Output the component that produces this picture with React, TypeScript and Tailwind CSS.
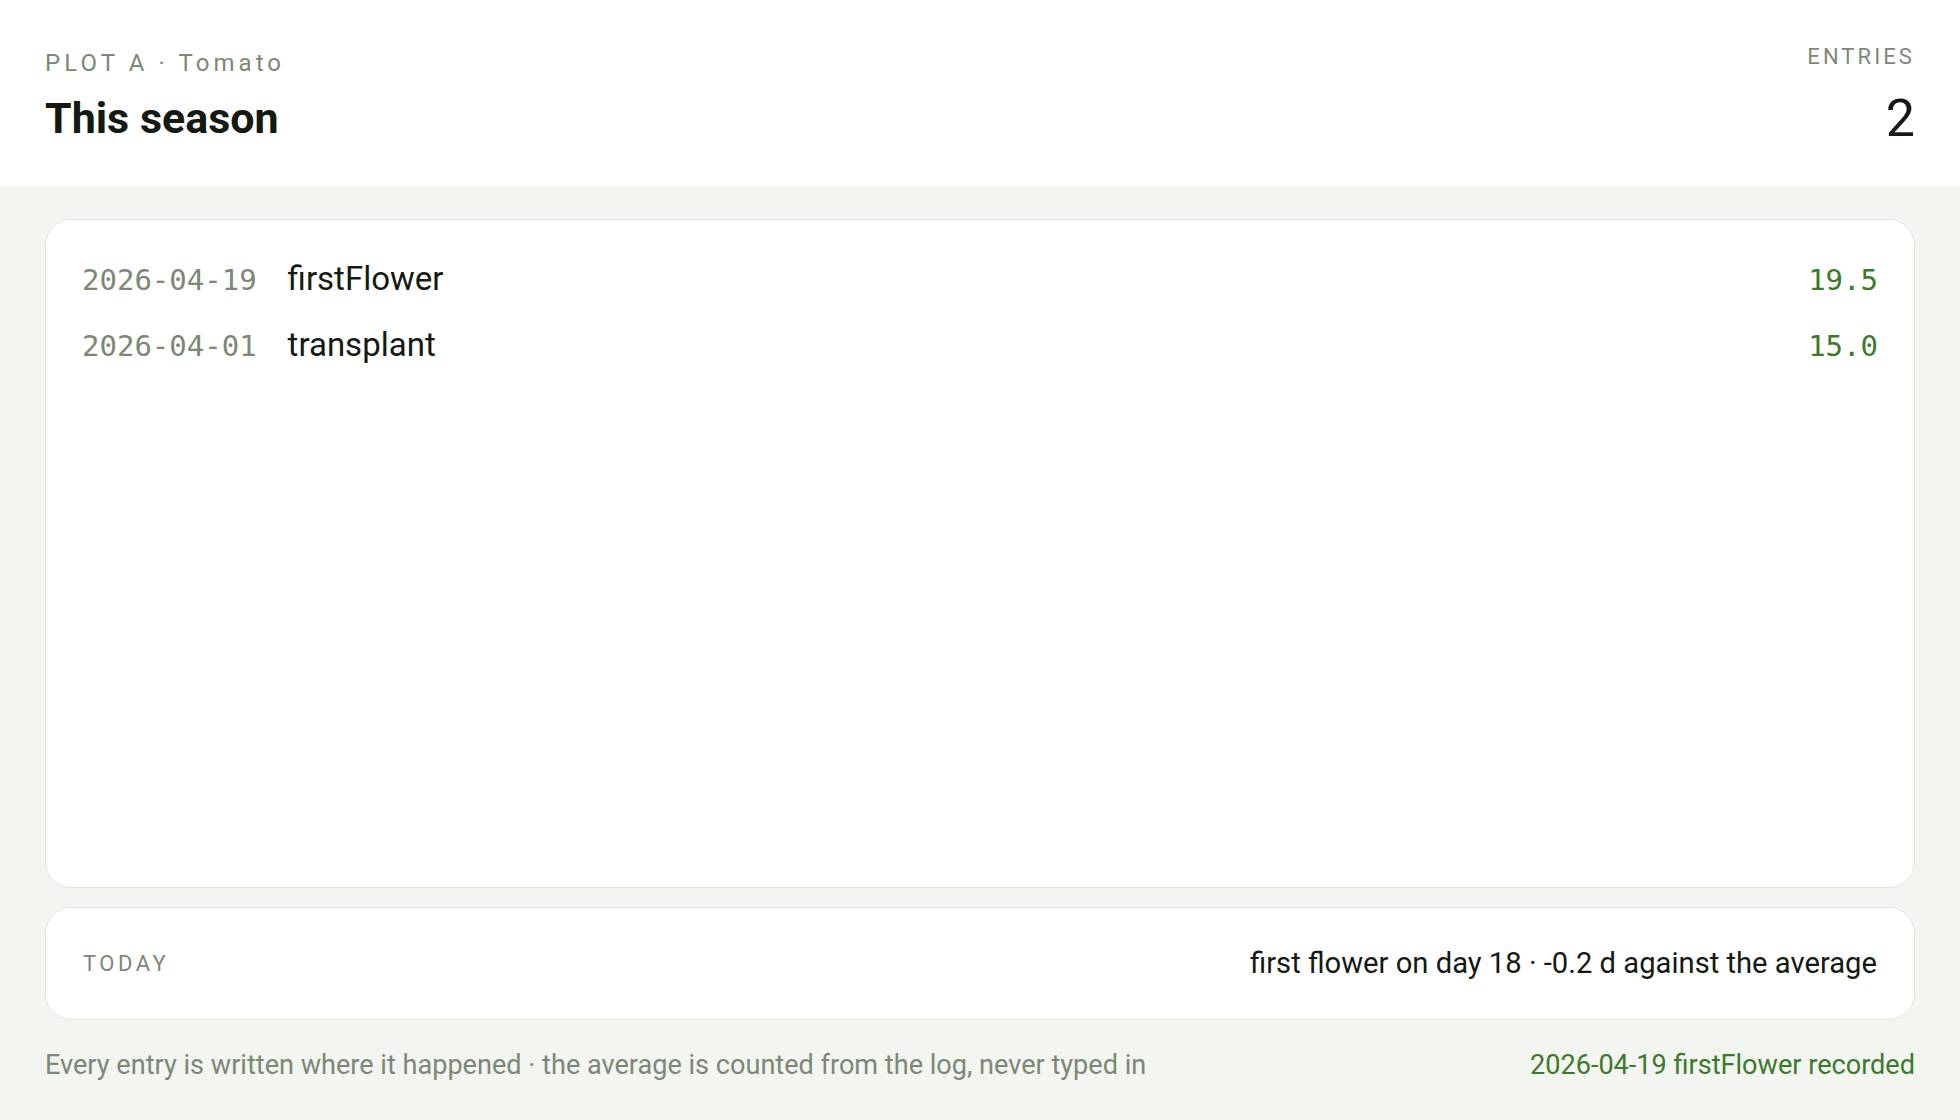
const entries = [
  { date: '2026-04-19', kind: 'firstFlower', gdd: '19.5' },
  { date: '2026-04-01', kind: 'transplant', gdd: '15.0' }
]

const sans = "font-['Roboto','Liberation_Sans',sans-serif]"
const mono = "font-['DejaVu_Sans_Mono','Liberation_Mono',monospace]"

export default function App() {
  return (
    <div className={`flex h-[1120px] w-full flex-col bg-[#f3f5f0] ${sans}`}>
      <header className="flex h-[186px] shrink-0 items-start justify-between bg-white px-[45px]">
        <div className="pt-[49px]">
          <p className="text-[24px] leading-[29px] tracking-[0.17em] text-[#7c8877]">PLOT A · Tomato</p>
          <h1 className="mt-[16px] text-[43px] font-bold leading-[48px] text-[#141a12]">This season</h1>
        </div>
        <div className="pt-[43px] text-right">
          <p className="text-[22px] leading-[27px] tracking-[0.14em] text-[#7c8877]">ENTRIES</p>
          <p className="mt-[23px] text-[52px] leading-[52px] text-[#141a12]">{entries.length}</p>
        </div>
      </header>

      <main className="flex flex-1 flex-col px-[45px] pt-[33px]">
        <section className="flex-1 rounded-[26px] border border-[#e1e7db] bg-white px-[36px] pt-[26px]">
          <ul>
            {entries.map((e) => (
              <li key={e.date} className="flex h-[66px] items-baseline gap-[31px] leading-[66px]">
                <span className={`${mono} text-[29px] text-[#7c8877]`}>{e.date}</span>
                <span className="text-[33px] text-[#141a12]">{e.kind}</span>
                <span className={`${mono} ml-auto text-[29px] text-[#3b7a2c]`}>{e.gdd}</span>
              </li>
            ))}
          </ul>
        </section>

        <section className="mt-[19px] flex h-[113px] shrink-0 items-center justify-between rounded-[26px] border border-[#e1e7db] bg-white px-[37px]">
          <span className="text-[22px] tracking-[0.16em] text-[#7c8877]">TODAY</span>
          <span className="text-[29.2px] text-[#141a12]">first flower on day 18 · -0.2 d against the average</span>
        </section>

        <footer className="flex shrink-0 items-start justify-between pb-[39px] pt-[29px] text-[27.1px] leading-[32px]">
          <span className="text-[#7c8877]">Every entry is written where it happened · the average is counted from the log, never typed in</span>
          <span className="text-[#3b7a2c]">2026-04-19 firstFlower recorded</span>
        </footer>
      </main>
    </div>
  )
}
